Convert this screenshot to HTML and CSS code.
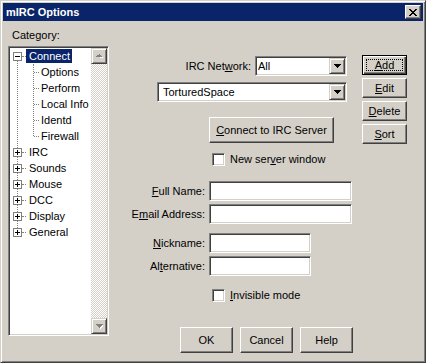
FILE: index.html
```html
<!DOCTYPE html>
<html lang="en">
<head>
    <meta charset="UTF-8">
    <title>mIRC Options</title>
    <link rel="stylesheet" href="styles.css">
</head>
<body>
<div class="window">
    <div class="titlebar">
        <span class="title">mIRC Options</span>
        <span class="close">
            <svg width="8" height="7" viewBox="0 0 8 7" shape-rendering="crispEdges"><path d="M0 0h2v1H0zM6 0h2v1H6zM1 1h2v1H1zM5 1h2v1H5zM2 2h4v1H2zM3 3h2v1H3zM2 4h4v1H2zM1 5h2v1H1zM5 5h2v1H5zM0 6h2v1H0zM6 6h2v1H6z" fill="#000"/></svg>
        </span>
    </div>

    <div class="content">
        <div class="left">
            <div class="caption">Category:</div>
            <div class="treebox">
                <div class="tree">
                    <div class="roots">
                        <div class="row"><span class="exp minus"></span><span class="hl"></span><span class="label sel">Connect</span></div>
                        <div class="kids">
                            <div class="row child"><span class="hl"></span><span class="label">Options</span></div>
                            <div class="row child"><span class="hl"></span><span class="label">Perform</span></div>
                            <div class="row child"><span class="hl"></span><span class="label">Local Info</span></div>
                            <div class="row child"><span class="hl"></span><span class="label">Identd</span></div>
                            <div class="row child"><span class="hl"></span><span class="label">Firewall</span></div>
                        </div>
                        <div class="row"><span class="exp plus"></span><span class="hl"></span><span class="label">IRC</span></div>
                        <div class="row"><span class="exp plus"></span><span class="hl"></span><span class="label">Sounds</span></div>
                        <div class="row"><span class="exp plus"></span><span class="hl"></span><span class="label">Mouse</span></div>
                        <div class="row"><span class="exp plus"></span><span class="hl"></span><span class="label">DCC</span></div>
                        <div class="row"><span class="exp plus"></span><span class="hl"></span><span class="label">Display</span></div>
                        <div class="row"><span class="exp plus"></span><span class="hl"></span><span class="label">General</span></div>
                    </div>
                </div>
                <div class="vscroll">
                    <div class="sbtn">
                        <svg width="7" height="5" viewBox="0 0 7 5" shape-rendering="crispEdges"><path d="M4 1h1v1h1v1h1v1H4z" fill="#fff"/><path d="M3 0h1v1h1v1h1v1H0V2h1V1h2z" fill="#808080"/></svg>
                    </div>
                    <div class="track"></div>
                    <div class="sbtn">
                        <svg width="7" height="5" viewBox="0 0 7 5" shape-rendering="crispEdges"><path d="M1 1h7v1H7v1H6v1H5v1H4V2h3z" fill="#fff"/><path d="M0 0h7v1H6v1H5v1H4v1H3V3H2V2H1V1H0z" fill="#808080"/></svg>
                    </div>
                </div>
            </div>
        </div>

        <div class="right">
            <div class="top">
                <div class="main">
                    <div class="netrow">
                        <span class="lbl">IRC Net<u>w</u>ork:</span>
                        <div class="combo net">
                            <span class="val">All</span>
                            <span class="drop"><svg width="7" height="4" viewBox="0 0 7 4" shape-rendering="crispEdges"><path d="M0 0h7v1H6v1H5v1H4v1H3V3H2V2H1V1H0z" fill="#000"/></svg></span>
                        </div>
                    </div>
                    <div class="combo server">
                        <span class="val">TorturedSpace</span>
                        <span class="drop"><svg width="7" height="4" viewBox="0 0 7 4" shape-rendering="crispEdges"><path d="M0 0h7v1H6v1H5v1H4v1H3V3H2V2H1V1H0z" fill="#000"/></svg></span>
                    </div>
                    <button class="btn connect"><u>C</u>onnect to IRC Server</button>
                    <div class="check newwin"><span class="box"></span>New ser<u>v</u>er window</div>
                </div>
                <div class="side">
                    <button class="btn default"><span class="focus"><u>A</u>dd</span></button>
                    <button class="btn"><u>E</u>dit</button>
                    <button class="btn"><u>D</u>elete</button>
                    <button class="btn"><u>S</u>ort</button>
                </div>
            </div>

            <div class="form">
                <span class="lbl"><u>F</u>ull Name:</span>
                <div class="field wide"></div>
                <span class="lbl">E<u>m</u>ail Address:</span>
                <div class="field wide"></div>
                <span class="lbl gap"><u>N</u>ickname:</span>
                <div class="field short gap"></div>
                <span class="lbl">Al<u>t</u>ernative:</span>
                <div class="field short"></div>
            </div>

            <div class="check invisible"><span class="box"></span><u>I</u>nvisible mode</div>

            <div class="actions">
                <button class="btn big">OK</button>
                <button class="btn big">Cancel</button>
                <button class="btn big">Help</button>
            </div>
        </div>
    </div>
</div>
</body>
</html>
```

FILE: styles.css
```css
* {
    box-sizing: border-box;
    margin: 0;
    padding: 0;
}

body {
    background: #d4d0c8;
    font-family: "Liberation Sans", Arial, sans-serif;
    font-size: 11px;
    color: #000;
    overflow: hidden;
}

u {
    text-decoration: underline;
}

.window {
    width: 426px;
    height: 363px;
    background: #d4d0c8;
    border: 1px solid;
    border-color: #d4d0c8 #404040 #404040 #d4d0c8;
    box-shadow: inset 1px 1px #fff, inset -1px -1px #808080;
    padding: 2px;
    display: flex;
    flex-direction: column;
}

/* title bar */
.titlebar {
    height: 18px;
    background: #0a246a;
    display: flex;
    align-items: center;
    padding-left: 3px;
}

.title {
    color: #fff;
    font-weight: bold;
    line-height: 13px;
}

.close {
    margin-left: auto;
    margin-right: 2px;
    width: 16px;
    height: 14px;
    background: #d4d0c8;
    border: 1px solid;
    border-color: #fff #404040 #404040 #fff;
    box-shadow: inset -1px -1px #808080;
    display: flex;
    align-items: center;
    justify-content: center;
}

.content {
    flex: 1;
    display: flex;
    padding: 8px 0 0 5px;
}

/* category tree */
.left {
    width: 101px;
}

.caption {
    height: 13px;
    line-height: 13px;
    padding-left: 4px;
    margin-bottom: 4px;
}

.treebox {
    height: 290px;
    display: flex;
    background: #fff;
    border: 1px solid;
    border-color: #808080 #fff #fff #808080;
    box-shadow: inset 1px 1px #404040, inset -1px -1px #d4d0c8;
    padding: 1px;
}

.tree {
    flex: 1;
    background: #fff;
    overflow: hidden;
}

.roots {
    position: relative;
}

.roots::before {
    content: '';
    position: absolute;
    left: 7px;
    top: 8px;
    height: 176px;
    border-left: 1px dotted #808080;
}

.kids {
    position: relative;
}

.kids::before {
    content: '';
    position: absolute;
    left: 23px;
    top: 0;
    height: 72px;
    border-left: 1px dotted #808080;
}

.row {
    height: 16px;
    display: flex;
    align-items: center;
    white-space: nowrap;
}

.row.child {
    padding-left: 24px;
}

.exp {
    position: relative;
    z-index: 1;
    width: 9px;
    height: 9px;
    margin-left: 3px;
    border: 1px solid #808080;
    background: #fff;
}

.exp.minus {
    background: linear-gradient(#000, #000) center / 5px 1px no-repeat, #fff;
}

.exp.plus {
    background: linear-gradient(#000, #000) center / 5px 1px no-repeat,
                linear-gradient(#000, #000) center / 1px 5px no-repeat, #fff;
}

.hl {
    width: 4px;
    border-top: 1px dotted #808080;
}

.child .hl {
    width: 5px;
}

.label {
    height: 14px;
    line-height: 14px;
    padding: 0 2px 0 3px;
}

.child .label {
    padding-left: 2px;
}

.label.sel {
    background: #0a246a;
    color: #fff;
}

.vscroll {
    width: 16px;
    display: flex;
    flex-direction: column;
}

.sbtn {
    height: 16px;
    background: #d4d0c8;
    border: 1px solid;
    border-color: #d4d0c8 #404040 #404040 #d4d0c8;
    box-shadow: inset 1px 1px #fff, inset -1px -1px #808080;
    display: flex;
    align-items: center;
    justify-content: center;
}

.track {
    flex: 1;
    background: repeating-conic-gradient(#fff 0 25%, #d4d0c8 0 50%) 0 0 / 2px 2px;
}

/* right side */
.right {
    flex: 1;
    display: flex;
    flex-direction: column;
    align-items: flex-start;
}

.top {
    display: flex;
}

.main {
    width: 190px;
    margin-left: 48px;
    margin-top: 27px;
    display: flex;
    flex-direction: column;
    align-items: flex-start;
}

.netrow {
    width: 100%;
    height: 20px;
    display: flex;
    justify-content: flex-end;
    align-items: center;
}

.netrow .lbl {
    margin-right: 4px;
}

.combo {
    height: 20px;
    background: #fff;
    border: 1px solid;
    border-color: #808080 #fff #fff #808080;
    box-shadow: inset 1px 1px #404040, inset -1px -1px #d4d0c8;
    padding: 1px;
    display: flex;
    align-items: center;
}

.combo.net {
    width: 92px;
}

.combo.net .val {
    padding-left: 1px;
}

.combo.server {
    width: 190px;
    margin-top: 6px;
}

.combo.server .val {
    padding-left: 4px;
}

.drop {
    margin-left: auto;
    width: 16px;
    height: 16px;
    background: #d4d0c8;
    border: 1px solid;
    border-color: #d4d0c8 #404040 #404040 #d4d0c8;
    box-shadow: inset 1px 1px #fff, inset -1px -1px #808080;
    display: flex;
    align-items: center;
    justify-content: center;
}

.btn {
    font: inherit;
    color: #000;
    background: #d4d0c8;
    border: 1px solid;
    border-color: #fff #404040 #404040 #fff;
    box-shadow: inset -1px -1px #808080;
    display: flex;
    align-items: center;
    justify-content: center;
    width: 45px;
    height: 20px;
}

.btn.default {
    border-color: #000;
    box-shadow: inset 1px 1px #fff, inset -1px -1px #404040, inset -2px -2px #808080;
    padding: 3px;
}

.focus {
    flex: 1;
    align-self: stretch;
    border: 1px dotted #000;
    display: flex;
    align-items: center;
    justify-content: center;
}

.btn.connect {
    width: 125px;
    height: 26px;
    margin-top: 15px;
    margin-left: 52px;
}

.side {
    margin-left: 15px;
    margin-top: 26px;
    display: flex;
    flex-direction: column;
    gap: 3px;
}

.check {
    height: 13px;
    line-height: 13px;
    display: flex;
    align-items: center;
    white-space: nowrap;
}

.check .box {
    width: 13px;
    height: 13px;
    margin-right: 5px;
    background: #fff;
    border: 1px solid;
    border-color: #808080 #fff #fff #808080;
    box-shadow: inset 1px 1px #404040, inset -1px -1px #d4d0c8;
}

.newwin {
    margin-top: 10px;
    margin-left: 55px;
}

/* personal info */
.form {
    margin-top: 15px;
    display: grid;
    grid-template-columns: 96px auto;
    column-gap: 4px;
    row-gap: 3px;
    align-items: center;
    justify-items: start;
}

.form .lbl {
    justify-self: end;
    white-space: nowrap;
}

.field {
    height: 20px;
    background: #fff;
    border: 1px solid;
    border-color: #808080 #fff #fff #808080;
    box-shadow: inset 1px 1px #404040, inset -1px -1px #d4d0c8;
}

.field.wide {
    width: 143px;
}

.field.short {
    width: 102px;
}

.form .gap {
    margin-top: 6px;
}

.invisible {
    margin-top: 13px;
    margin-left: 103px;
}

.actions {
    margin-top: 25px;
    margin-left: 71px;
    display: flex;
    gap: 7px;
}

.btn.big {
    width: 53px;
    height: 26px;
}
```
